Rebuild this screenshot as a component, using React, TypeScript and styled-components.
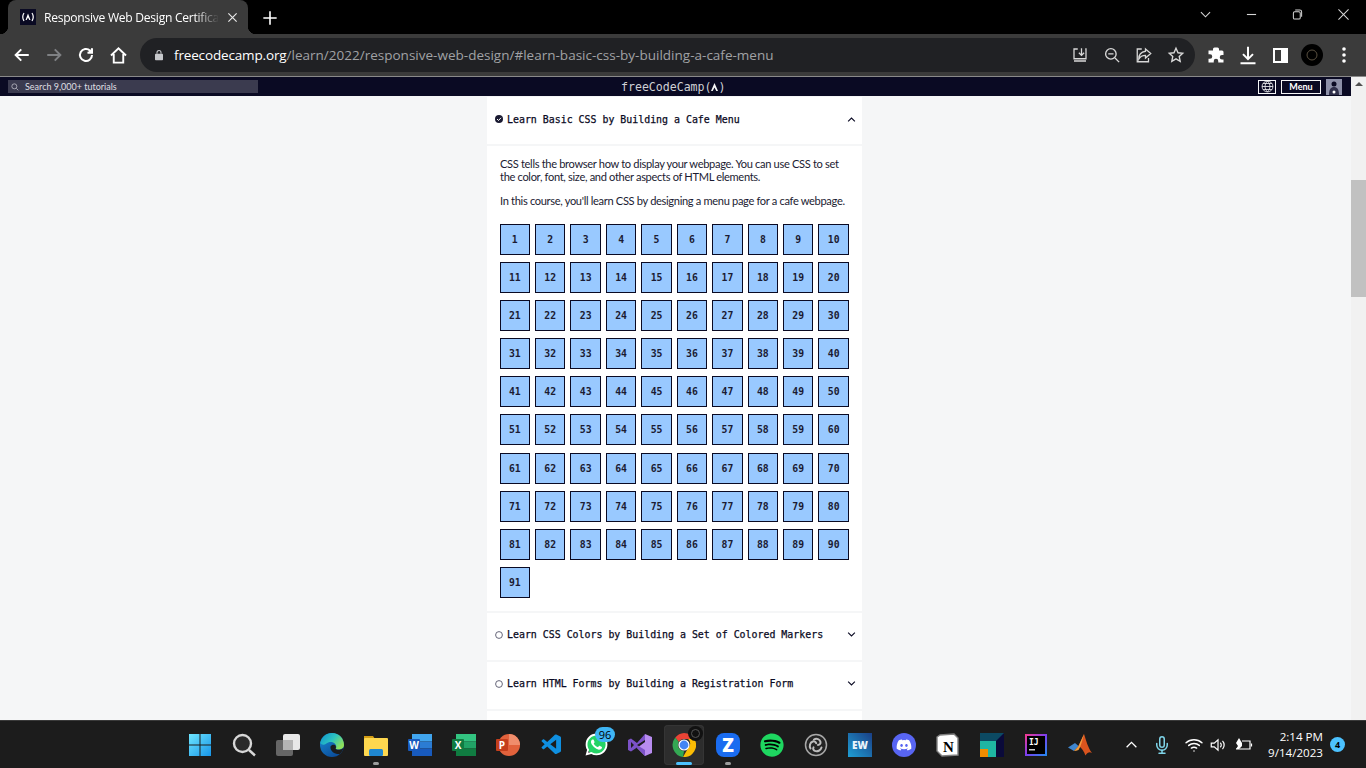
import React from 'react';
import styled, { createGlobalStyle } from 'styled-components';
import { FaWhatsapp, FaSpotify, FaDiscord } from 'react-icons/fa';
import { VscVscode } from 'react-icons/vsc';
import { FiMic, FiWifi } from 'react-icons/fi';

const Global = createGlobalStyle`
  html, body { margin: 0; padding: 0; height: 100%; overflow: hidden; background: #000; }
  #root { height: 100%; }
  * { box-sizing: border-box; }
`;

const Screen = styled.div`
  width: 1366px; height: 768px; display: flex; flex-direction: column; overflow: hidden;
  font-family: "Open Sans", "Liberation Sans", sans-serif;
`;

const TitleBar = styled.div`
  height: 34px; background: #000; display: flex; align-items: flex-end; padding-left: 8px; flex: none;
`;
const Tab = styled.div`
  position: relative; width: 240px; height: 34px; background: #3b3b3b; border-radius: 8px 8px 0 0;
  display: flex; align-items: center; padding: 0 8px 0 12px; color: #fff;
  &::before, &::after { content: ''; position: absolute; bottom: 0; width: 8px; height: 8px; }
  &::before { left: -8px; background: radial-gradient(circle at 0 0, transparent 8px, #3b3b3b 8.5px); }
  &::after { right: -8px; background: radial-gradient(circle at 100% 0, transparent 8px, #3b3b3b 8.5px); }
`;
const Favicon = styled.div`
  width: 16px; height: 16px; background: #0a0a23; color: #fff; flex: none;
  display: flex; align-items: center; justify-content: center;
`;
const TabTitle = styled.span`
  margin-left: 8px; width: 175px; white-space: nowrap; font-size: 12.1px;
  letter-spacing: -0.27px; flex: none;
  -webkit-mask-image: linear-gradient(to right, #000 86%, transparent 100%);
  mask-image: linear-gradient(to right, #000 86%, transparent 100%);
`;
const TabClose = styled.div`
  width: 16px; height: 16px; flex: none; margin-left: 5px; display: flex; align-items: center; justify-content: center;
`;
const NewTab = styled.div`
  width: 16px; height: 16px; margin-left: 14px; margin-bottom: 9px; flex: none;
`;
const WindowControls = styled.div`
  margin-left: auto; display: flex; height: 34px; align-self: flex-start;
`;
const WindowButton = styled.div`
  width: 46px; height: 28px; display: flex; align-items: center; justify-content: center;
  color: #d6d6d6;
`;

const Toolbar = styled.div`
  height: 42px; flex: none; background: #3b3b3b; display: flex; align-items: center; padding: 0 8px 0 6px;
`;
const NavIcon = styled.div<{ $w?: number }>`
  width: ${(p) => p.$w ?? 32}px; height: 32px; display: flex; align-items: center; justify-content: center; flex: none;
`;
const Omnibox = styled.div`
  width: 1055px; height: 34px; margin-left: 6px; background: #202124; border-radius: 17px;
  display: flex; align-items: center; padding: 0 3px 0 15px; flex: none;
`;
const Url = styled.div`
  margin-left: 11px; font-size: 13.5px; color: #a0a2a5; white-space: nowrap; letter-spacing: 0.01px;
  b { color: #fff; font-weight: 400; letter-spacing: -0.15px; }
`;
const OmniIcons = styled.div`
  margin-left: auto; display: flex; align-items: center;
`;
const ToolIcons = styled.div`
  margin-left: 5px; display: flex; align-items: center;
`;
const Divider = styled.div`
  height: 1px; background: #8a8a8a; flex: none;
`;

const Page = styled.div`
  flex: 1; min-height: 0; display: flex;
`;
const Viewport = styled.div`
  flex: 1; min-width: 0; display: flex; flex-direction: column;
`;
const FccNav = styled.div`
  height: 19px; background: #0a0a23; display: flex; align-items: center; padding: 0 9px 0 8px;
  position: relative; flex: none;
`;
const Search = styled.div`
  width: 250px; height: 13px; background: #3b3b4f; display: flex; align-items: center; padding-left: 3px;
  color: #dfdfe2; font: 9px/13px Lato, sans-serif;
  span { margin-left: 6px; }
`;
const Brand = styled.div`
  position: absolute; left: 621px; top: 0; height: 19px; display: flex; align-items: center;
  color: #d0d0d5; font: 11.6px "DejaVu Sans Mono", monospace; letter-spacing: -0.02px;
`;
const NavRight = styled.div`
  margin-left: auto; display: flex; align-items: center; gap: 5px;
`;
const GlobeBox = styled.div`
  width: 18px; height: 14px; border: 1px solid #f5f6f7; display: flex; align-items: center; justify-content: center; color: #f5f6f7;
`;
const MenuBtn = styled.div`
  width: 40px; height: 14px; border: 1px solid #f5f6f7; color: #fff; font: 700 9px/12px Lato, sans-serif;
  text-align: center;
`;
const Avatar = styled.div`
  width: 16px; height: 16px; background: #8d90a8; display: flex; align-items: flex-end; justify-content: center;
`;
const Main = styled.div`
  flex: 1; min-height: 0; background: #f5f6f7; display: flex; justify-content: center; padding: 1px 2px 0 0; overflow: hidden;
`;
const Card = styled.div`
  width: 375px; flex: none; display: flex; flex-direction: column; gap: 2px;
`;
const Section = styled.div`
  background: #fff; flex: none;
`;
const Head = styled.div`
  height: 47px; display: flex; align-items: center; padding: 0 6px 3px 8px; color: #0a0a23;
  font: 400 9.92px "DejaVu Sans Mono", monospace; -webkit-text-stroke: 0.25px #0a0a23;
  span { margin-left: 4px; }
  svg:last-child { margin-left: auto; }
`;
const Body = styled.div`
  padding: 11px 13px 13px 13px; border-top: 2px solid #f5f6f7;
`;
const Para = styled.p`
  margin: 0 0 11px; font: 11.1px/13px Lato, sans-serif; color: #1b1b32; letter-spacing: -0.33px;
`;
const StepGrid = styled.div`
  display: grid; grid-template-columns: repeat(10, 1fr); column-gap: 5px; row-gap: 7.1px; width: 349.3px;
  margin: 17px 0 0 -0.4px;
`;
const Step = styled.div`
  height: 31px; background: #99c9ff; border: 1px solid #0a0a23; color: #1b1b32;
  display: flex; align-items: center; justify-content: center;
  font: 700 9.8px "DejaVu Sans Mono", monospace;
`;
const LastSection = styled(Section)`
  height: 40px; padding: 9px 0 0 8px;
`;
const BlueBar = styled.div`
  width: 90px; height: 10px; background: #99c9ff;
`;
const Scrollbar = styled.div`
  width: 15px; flex: none; background: #f1f1f1; display: flex; flex-direction: column; align-items: center;
  position: relative;
  i { display: block; width: 0; height: 0; margin-top: 5px; border: 4px solid transparent; border-top: 0; border-bottom: 4px solid #505050; }
`;
const Thumb = styled.div`
  position: absolute; left: 0; top: 103px; width: 15px; height: 117px; background: #c1c1c1;
`;

const Taskbar = styled.div`
  height: 48px; flex: none; background: #1c1c1c; border-top: 1px solid #3a3a3a; display: flex; align-items: center;
  padding-left: 178px; position: relative;
`;
const Apps = styled.div`
  display: flex; align-items: center;
`;
const AppSlot = styled.div<{ $active?: boolean }>`
  position: relative; height: 40px; flex: none; display: flex; align-items: center; justify-content: center;
  width: ${(p) => (p.$active ? 40 : 44)}px; margin: 0 ${(p) => (p.$active ? 2 : 0)}px;
  ${(p) => p.$active && 'background: #2d2d2d; border-radius: 4px; box-shadow: inset 0 0 0 1px #353535;'}
`;
const OpenDot = styled.div<{ $active?: boolean }>`
  position: absolute; bottom: 0; left: 50%; transform: translateX(-50%);
  width: ${(p) => (p.$active ? 16 : 6)}px; height: 3px; border-radius: 2px;
  background: ${(p) => (p.$active ? '#4cc2ff' : '#9d9d9d')};
`;
const Badge = styled.div`
  position: absolute; top: 2px; right: 3px; width: 20px; height: 15px; border-radius: 8px; background: #3fb6f5;
  color: #000; font: 11px/15px "Open Sans", sans-serif; text-align: center;
`;
const ChromeBadge = styled.div`
  position: absolute; top: 1px; right: 1px; width: 15px; height: 15px; border-radius: 50%; background: #111;
  display: flex; align-items: center; justify-content: center;
  &::after { content: ''; width: 7px; height: 7px; border-radius: 50%; border: 1px solid #555; }
`;
const Tray = styled.div`
  position: absolute; left: 1120px; top: 0; bottom: 0; right: 0; display: flex; align-items: center; color: #fff;
`;
const TrayIcon = styled.div<{ $w: number }>`
  width: ${(p) => p.$w}px; display: flex; align-items: center; justify-content: center; flex: none;
`;
const Clock = styled.div`
  width: 65px; white-space: nowrap; display: flex; flex-direction: column; align-items: flex-end; color: #fff;
  font: 11.6px/16px "Open Sans", sans-serif;
`;
const Notif = styled.div`
  margin-left: 7px; width: 15px; height: 15px; border-radius: 50%; background: #4cc2ff; color: #000;
  font: 700 9px/15px "Open Sans", sans-serif; text-align: center;
`;

const Logo = () => (
  <svg width="14" height="10" viewBox="0 0 14 10" fill="none" stroke="currentColor">
    <path d="M3 1 Q0.5 5 3 9M11 1q2.500 4 0 8" strokeWidth="1.200" />
    <path d="M7 1.500 L9.500 8 H8.300 L7 5.500 5.700 8 H4.500Z" fill="currentColor" stroke="none" />
  </svg>
);

const S = ({ children, w = 18, h = 18, vb = '0 0 24 24', sw = 2, c = 'currentColor' }: { children: React.ReactNode; w?: number; h?: number; vb?: string; sw?: number; c?: string }) => (
  <svg width={w} height={h} viewBox={vb} fill="none" stroke={c} strokeWidth={sw}>{children}</svg>
);

const WinLogo = () => (
  <svg width="24" height="24" viewBox="0 0 24 24">
    <defs><linearGradient id="w" x1="0" y1="0" x2="1" y2="1"><stop offset="0" stopColor="#6fe6ff" /><stop offset="1" stopColor="#1795e8" /></linearGradient></defs>
    <path fill="url(#w)" d="M1 1h10.500v10.500H1zM12.500 1H23v10.500H12.500zM1 12.500h10.500V23H1zM12.500 12.500H23V23H12.500z" />
  </svg>
);
const SearchApp = () => (
  <S w={24} h={24} c="#d8d8d8" sw={2.4}><circle cx="10.500" cy="10.500" r="8.500" stroke="#d8d8d8" fill="#2a2a2a" /><path d="M17 17l6 5.500" /></S>
);
const TaskView = () => (
  <svg width="24" height="24" viewBox="0 0 24 24">
    <rect x="7" y="1" width="17" height="16" rx="2" fill="#e8e8e8" />
    <rect x="0" y="7" width="17" height="16" rx="2" fill="#666" />
    <rect x="7" y="7" width="10" height="10" fill="#b5b5b5" />
  </svg>
);
const Edge = () => (
  <svg width="24" height="24" viewBox="0 0 24 24">
    <defs>
      <linearGradient id="e1" x1="0" y1="0" x2="1" y2="0.6"><stop offset="0" stopColor="#0e8fd0" /><stop offset=".55" stopColor="#2cc4c0" /><stop offset="1" stopColor="#8fe05a" /></linearGradient>
      <linearGradient id="e2" x1="0" y1="0" x2="0.6" y2="1"><stop offset="0" stopColor="#1a8fd8" /><stop offset="1" stopColor="#0b4d9a" /></linearGradient>
    </defs>
    <circle cx="12" cy="12" r="12" fill="url(#e2)" />
    <path fill="url(#e1)" d="M.2 10C1.500 4 6 0 12 0c7 0 12 5.500 12 12 0 3-2.500 4.500-5.500 4.500-1.500 0-2.500-.3-2.800-.8 1-1 .8-3.500-.7-5-2-2-6-2.500-9 0C3.500 12.500 1.500 11.500.2 10z" />
    <path fill="#1c1c1c" d="M10.500 13.500c.8-1.300 2.700-2 4.200-1.500 1.300.5 1.600 2.500.8 3.700.8 1 2.500 1.300 4 1 1.500-.2 3-.8 4-2-.5 2.500-1.800 4.800-3.800 6.300-2 .3-5-.2-7-2-1.600-1.500-2.500-3.500-2.200-5.500z" />
  </svg>
);
const Folder = () => (
  <svg width="24" height="24" viewBox="0 0 24 24">
    <path fill="#d39d15" d="M0 3h9l2 3h-11z" />
    <rect x="0" y="5" width="24" height="18" rx="1" fill="#fdd74f" />
    <rect x="5" y="16" width="14" height="7" rx="1.500" fill="#1f87d0" />
  </svg>
);
const OfficeTile = ({ c1, c2, c3, bc, l }: { c1: string; c2: string; c3: string; bc: string; l: string }) => (
  <svg width="24" height="24" viewBox="0 0 24 24">
    <rect x="4" y="1" width="20" height="7.500" fill={c1} />
    <rect x="4" y="8.500" width="20" height="7" fill={c2} />
    <rect x="4" y="15.500" width="20" height="7.500" fill={c3} />
    <rect x="0" y="6" width="12" height="12" rx="1" fill={bc} />
    <text x="6" y="15.500" textAnchor="middle" fontSize="10" fontWeight="700" fontFamily="Open Sans" fill="#fff">{l}</text>
  </svg>
);
const Ppt = () => (
  <svg width="24" height="24" viewBox="0 0 24 24">
    <circle cx="13" cy="12" r="11" fill="#e2623c" />
    <path d="M13 1a11 11 0 0 1 11 11H13z" fill="#f08d6c" />
    <rect x="0" y="6" width="12" height="12" rx="1" fill="#c43e1c" />
    <text x="6" y="15.500" textAnchor="middle" fontSize="10" fontWeight="700" fontFamily="Open Sans" fill="#fff">P</text>
  </svg>
);
const VisualStudio = () => (
  <svg width="24" height="24" viewBox="0 0 24 24">
    <path fill="#b88cf0" d="M17 1l7 3v16l-7 3-8-8 8-6z" />
    <path fill="#7c52c8" d="M0 7l3-1.500 6 4.500L17 1v6l-8 5 8 5v6L9 14.500 3 18.500 0 17zM3 9v6l3-3z" />
  </svg>
);
const Chrome = () => (
  <svg width="24" height="24" viewBox="0 0 24 24">
    <path fill="#ea4335" d="M12 0a12 12 0 0 1 10.400 6H12a6 6 0 0 0-5.200 3L3.300 4.500A12 12 0 0 1 12 0z" />
    <path fill="#fbbc04" d="M22.400 6A12 12 0 0 1 11 24l5.200-9a6 6 0 0 0 0-9z" />
    <path fill="#34a853" d="M3.300 4.500L6.800 9a6 6 0 0 0 5.200 9l-1 6A12 12 0 0 1 3.300 4.500z" />
    <circle cx="12" cy="12" r="5" fill="#4285f4" stroke="#fff" strokeWidth="1.200" />
  </svg>
);
const ZApp = () => (
  <svg width="24" height="24" viewBox="0 0 24 24">
    <rect width="24" height="24" rx="8" fill="#1a6cf0" />
    <text x="12" y="18.500" textAnchor="middle" fontSize="19" fontWeight="800" fontFamily="Open Sans" fill="#fff">Z</text>
  </svg>
);
const Obs = () => (
  <svg width="24" height="24" viewBox="0 0 24 24" fill="none">
    <circle cx="12" cy="12" r="10.500" fill="#242424" stroke="#a8a8a8" strokeWidth="1.500" />
    <g stroke="#bdbdbd" strokeWidth="2" strokeLinecap="round">
      <path d="M10 6.500c2.500-1.500 6-.3 6.500 2.500.3 1.800-1 3-2.500 3" />
      <path d="M6.500 15.500c-1.500-2.500-.5-6 2.300-7 1.500-.5 3 .3 3.400 1.800" />
      <path d="M17.500 14.500c-.8 3-4 4.500-6.700 3.400-1.500-.6-2-2.200-1.300-3.500" />
    </g>
  </svg>
);
const Ew = () => (
  <svg width="24" height="24" viewBox="0 0 24 24">
    <defs><linearGradient id="ew" x1="0" y1="1" x2="1" y2="0"><stop offset="0" stopColor="#1f9fd4" /><stop offset="1" stopColor="#1a3f86" /></linearGradient></defs>
    <rect width="24" height="24" fill="url(#ew)" />
    <text x="12" y="16" textAnchor="middle" fontSize="10" fontWeight="800" fontFamily="Open Sans" fill="#eaf4fb">EW</text>
  </svg>
);
const Notion = () => (
  <svg width="24" height="24" viewBox="0 0 24 24">
    <path fill="#fff" stroke="#7f7f7f" strokeWidth="1.400" d="M4 2 L18 1 L22 5 V22 L6 23 L1 18 V4z" />
    <text x="12.500" y="18.500" textAnchor="middle" fontSize="15" fontWeight="700" fontFamily="Liberation Serif" fill="#000">N</text>
  </svg>
);
const Teal = () => (
  <svg width="24" height="24" viewBox="0 0 24 24">
    <rect width="24" height="24" fill="#0a0a3a" />
    <path fill="#0c4a63" d="M0 0h24L16 8H0z" />
    <path fill="#1fb5a3" d="M0 8h16v16H8V16H0z" />
    <rect x="0" y="16" width="8" height="8" fill="#f08c00" />
  </svg>
);
const Idea = () => (
  <svg width="22" height="22" viewBox="0 0 22 22">
    <defs><linearGradient id="ij" x1="0" y1="0" x2="1" y2="1"><stop offset="0" stopColor="#f9398a" /><stop offset=".5" stopColor="#7b3ff0" /><stop offset="1" stopColor="#1f8ef0" /></linearGradient></defs>
    <rect width="22" height="22" fill="url(#ij)" />
    <rect x="2" y="2" width="18" height="18" fill="#000" />
    <text x="4" y="11" fontSize="8" fontWeight="700" fontFamily="DejaVu Sans Mono" fill="#fff">IJ</text>
    <rect x="4" y="15" width="6" height="1.500" fill="#ccc" />
  </svg>
);
const Matlab = () => (
  <svg width="24" height="24" viewBox="0 0 24 24">
    <path fill="#3f86cf" d="M0 14.500l7-4.500 3.500 3L6 18z" />
    <path fill="#d9541e" d="M10.500 13L16 1c2 6 4 14 8 19-2.500-1.500-4.500-.5-6.500 2.500-1.500-4-4-8-7-9.500z" />
    <path fill="#f29a3c" d="M16 1c-1.500 6-3 12-5.500 16-1.500.5-3 1-4.500 1l4.500-5z" />
  </svg>
);

function DiscordRound() {
  return (
    <svg width="24" height="24" viewBox="0 0 24 24">
      <circle cx="12" cy="12" r="12" fill="#5865f2" />
      <svg x="4" y="4" width="16" height="16" viewBox="0 0 16 16"><FaDiscord size={16} color="#fff" /></svg>
    </svg>
  );
}

const apps: { key: string; node: React.ReactNode; dot?: boolean; extra?: React.ReactNode; active?: boolean }[] = [
  { key: 'win', node: <WinLogo /> },
  { key: 'search', node: <SearchApp /> },
  { key: 'tv', node: <TaskView /> },
  { key: 'edge', node: <Edge /> },
  { key: 'folder', node: <Folder />, dot: true },
  { key: 'word', node: <OfficeTile c1="#41a5ee" c2="#2b7cd3" c3="#185abd" bc="#185abd" l="W" /> },
  { key: 'excel', node: <OfficeTile c1="#33c481" c2="#21a366" c3="#107c41" bc="#107c41" l="X" /> },
  { key: 'ppt', node: <Ppt /> },
  { key: 'vsc', node: <VscVscode size={24} color="#0f8fe0" /> },
  { key: 'wa', node: <FaWhatsapp size={25} color="#fff" style={{ background: 'radial-gradient(circle, #25d366 58%, transparent 60%)' }} />, extra: <Badge>96</Badge> },
  { key: 'vs', node: <VisualStudio /> },
  { key: 'chrome', node: <Chrome />, active: true, dot: true, extra: <ChromeBadge /> },
  { key: 'z', node: <ZApp />, dot: true },
  { key: 'spot', node: <FaSpotify size={24} color="#1ed760" style={{ background: 'radial-gradient(circle, #000 60%, transparent 62%)' }} /> },
  { key: 'obs', node: <Obs /> },
  { key: 'ew', node: <Ew /> },
  { key: 'disc', node: <DiscordRound /> },
  { key: 'notion', node: <Notion /> },
  { key: 'teal', node: <Teal /> },
  { key: 'ij', node: <Idea /> },
  { key: 'mat', node: <Matlab /> },
];

const Up = () => <S w={9} h={9} sw={3}><path d="M3 17l9-9 9 9" /></S>;
const Down = () => <S w={9} h={9} sw={3}><path d="M3 7l9 9 9-9" /></S>;
const Checked = () => (
  <svg width="8" height="8" viewBox="0 0 8 8"><circle cx="4" cy="4" r="4" fill="#1b1b32" /><path d="M2 4l1.500 1.500L6 2.800" fill="none" stroke="#fff" /></svg>
);
const Empty = () => (
  <svg width="8" height="8" viewBox="0 0 8 8"><circle cx="4" cy="4" r="3.400" fill="none" stroke="#55556a" strokeWidth=".9" /></svg>
);
const Logo2 = () => (
  <svg width="7" height="8" viewBox="0 0 7 8"><path d="M3.500 0L7 8H5.300L3.500 4.500 1.700 8H0z" fill="#f5f6f7" /></svg>
);

const steps = Array.from({ length: 91 }, (_, i) => i + 1);

export default function App() {
  return (
    <Screen>
      <Global />
      <TitleBar>
        <Tab>
          <Favicon><Logo /></Favicon>
          <TabTitle>Responsive Web Design Certifica</TabTitle>
          <TabClose><S w={11} h={11} sw={2.6} c="#e8e8e8"><path d="M3 3l18 18M21 3L3 21" /></S></TabClose>
        </Tab>
        <NewTab><S w={16} h={16} sw={2.400} c="#fff"><path d="M12 2v20M2 12h20" /></S></NewTab>
        <WindowControls>
          <WindowButton><S w={11} h={11} sw={1.200} vb="0 0 12 12"><path d="M1 3.500l5 5 5-5" /></S></WindowButton>
          <WindowButton><S w={11} h={11} sw={1.200} vb="0 0 12 12"><path d="M1 6h10" /></S></WindowButton>
          <WindowButton><S w={11} h={11} sw={1.100} vb="0 0 12 12"><rect x="1.500" y="3" width="7.500" height="8" rx="1.500" /><path d="M3.500 1h5a2 2 0 0 1 2 2v5.500" /></S></WindowButton>
          <WindowButton><S w={11} h={11} sw={1.100} vb="0 0 12 12"><path d="M.5.500l11 11M11.500.500l-11 11" /></S></WindowButton>
        </WindowControls>
      </TitleBar>
      <Toolbar>
        <NavIcon><S w={18} h={18} sw={2.600} c="#fff"><path d="M21 12H4M11 4.500L3.500 12l7.500 7.500" /></S></NavIcon>
        <NavIcon><S w={18} h={18} sw={2.600} c="#7f8184"><path d="M3 12h17M13 4.500l7.500 7.500-7.500 7.500" /></S></NavIcon>
        <NavIcon><S w={18} h={18} sw={2.700} c="#fff"><path d="M20 12a8 8 0 1 1-2.500-5.800" /><path d="M20 3v6h-6" fill="#fff" /></S></NavIcon>
        <NavIcon><S w={19} h={19} sw={2.400} c="#fff"><path d="M2.500 12L12 3l9.500 9M6 10v11h12V10" /></S></NavIcon>
        <Omnibox>
          <svg width="8" height="12" viewBox="0 0 10 13"><rect x="0" y="5" width="10" height="8" rx="1" fill="#c6c8cb" /><path d="M2.500 5V3.500a2.500 2.500 0 0 1 5 0V5" fill="none" stroke="#c6c8cb" strokeWidth="1.300" /></svg>
          <Url><b>freecodecamp.org</b>/learn/2022/responsive-web-design/#learn-basic-css-by-building-a-cafe-menu</Url>
          <OmniIcons>
            <NavIcon><S w={18} h={18} sw={1.700} c="#d8d8d8"><path d="M9 4H4v13h16V4h-1M4 20h16" /><path d="M14 3v9M10.500 9l3.500 3.500L17.500 9" /></S></NavIcon>
            <NavIcon><S w={18} h={18} sw={1.800} c="#d8d8d8"><circle cx="10.500" cy="10.500" r="7" /><path d="M7 10.500h7M16 16l5.500 5.500" /></S></NavIcon>
            <NavIcon><S w={18} h={18} sw={1.700} c="#d8d8d8"><path d="M14 4l7 6-7 6v-3.500c-4 0-7 1.500-9 5 0-6 3-9.500 9-10.500z" /><path d="M9 4H3v17h15v-5" /></S></NavIcon>
            <NavIcon><S w={18} h={18} sw={1.800} c="#d8d8d8"><path d="M12 3l2.700 6 6.300.7-4.700 4.300 1.300 6.500L12 17.200 6.400 20.500 7.700 14 3 9.700 9.300 9z" /></S></NavIcon>
          </OmniIcons>
        </Omnibox>
        <ToolIcons>
          <NavIcon><svg width="18" height="18" viewBox="0 0 24 24" fill="#fff"><path d="M10 2h4a2 2 0 0 1 2 2v2h4a2 2 0 0 1 2 2v4h-2a3 3 0 0 0 0 6h2v4H15v-2a3 3 0 0 0-6 0v2H2v-5h2a3 3 0 0 0 0-6H2V6h6V4a2 2 0 0 1 2-2z" /></svg></NavIcon>
          <NavIcon><S w={20} h={20} sw={2.400} c="#fff"><path d="M12 2v15M6 11l6 6 6-6M3 22h18" /></S></NavIcon>
          <NavIcon><svg width="15" height="15" viewBox="0 0 15 15"><path fillRule="evenodd" fill="#fff" d="M0 0h15v15H0zM2 2v11h6V2z" /></svg></NavIcon>
          <NavIcon><svg width="22" height="22" viewBox="0 0 22 22"><circle cx="11" cy="11" r="11" fill="#000" /><circle cx="11" cy="11" r="5" fill="none" stroke="#5a5040" /></svg></NavIcon>
          <NavIcon><svg width="4" height="16" viewBox="0 0 4 16" fill="#fff"><circle cx="2" cy="2" r="1.800" /><circle cx="2" cy="8" r="1.800" /><circle cx="2" cy="14" r="1.800" /></svg></NavIcon>
        </ToolIcons>
      </Toolbar>
      <Divider />
      <Page>
        <Viewport>
          <FccNav>
            <Search>
              <S w={8} h={8} sw={2.200} c="#c8c8d0"><circle cx="10" cy="10" r="7.500" /><path d="M16 16l6 6" /></S>
              <span>Search 9,000+ tutorials</span>
            </Search>
            <Brand>freeCodeCamp(<Logo2 />)</Brand>
            <NavRight>
              <GlobeBox><S w={13} h={13} sw={1.500}><circle cx="12" cy="12" r="10" /><path d="M2 12h20M12 2c-6 6-6 14 0 20M12 2c6 6 6 14 0 20M4 6.500h16M4 17.500h16" /></S></GlobeBox>
              <MenuBtn>Menu</MenuBtn>
              <Avatar><svg width="14" height="15" viewBox="0 0 14 15"><circle cx="7" cy="4" r="2.500" fill="#0a0a23" /><path d="M2 15c0-6 2-8 5-8s5 2 5 8z" fill="#2f2f4a" /><circle cx="7" cy="12" r="1.500" fill="#fff" /></svg></Avatar>
            </NavRight>
          </FccNav>
          <Main>
            <Card>
              <Section>
                <Head><Checked /><span>Learn Basic CSS by Building a Cafe Menu</span><Up /></Head>
                <Body>
                  <Para>CSS tells the browser how to display your webpage. You can use CSS to set the color, font, size, and other aspects of HTML elements.</Para>
                  <Para>In this course, you'll learn CSS by designing a menu page for a cafe webpage.</Para>
                  <StepGrid>
                    {steps.map((n) => <Step key={n}>{n}</Step>)}
                  </StepGrid>
                </Body>
              </Section>
              <Section><Head><Empty /><span>Learn CSS Colors by Building a Set of Colored Markers</span><Down /></Head></Section>
              <Section><Head><Empty /><span>Learn HTML Forms by Building a Registration Form</span><Down /></Head></Section>
              <LastSection><BlueBar /></LastSection>
            </Card>
          </Main>
        </Viewport>
        <Scrollbar><i /><Thumb /></Scrollbar>
      </Page>
      <Taskbar>
        <Apps>
          {apps.map((a) => (
            <AppSlot key={a.key} $active={a.active}>
              {a.node}
              {a.extra}
              {a.dot && <OpenDot $active={a.active} />}
            </AppSlot>
          ))}
        </Apps>
        <Tray>
          <TrayIcon $w={22}><S w={13} h={13} sw={2.400} c="#fff"><path d="M3 17l9-9 9 9" /></S></TrayIcon>
          <TrayIcon $w={40}><FiMic size={18} color="#7fd4e8" /></TrayIcon>
          <TrayIcon $w={24}><FiWifi size={18} /></TrayIcon>
          <TrayIcon $w={24}><S w={18} h={18} sw={1.600}><path d="M3 9.500v5h4l5 4.500v-14L7 9.500zM15 9a4 4 0 0 1 0 6M18 6.500a8 8 0 0 1 0 11" /></S></TrayIcon>
          <TrayIcon $w={28}><svg width="18" height="14" viewBox="0 0 18 14" fill="none" stroke="#fff" strokeWidth="1.200"><path d="M7 3h8v8H1h1" /><path d="M16.500 5.500v3" /><path fill="#fff" stroke="none" d="M4 0l3 5v3l-3 3H1l2-3-2-3z" /></svg></TrayIcon>
          <Clock><span>2:14 PM</span><span>9/14/2023</span></Clock>
          <Notif>4</Notif>
        </Tray>
      </Taskbar>
    </Screen>
  );
}
